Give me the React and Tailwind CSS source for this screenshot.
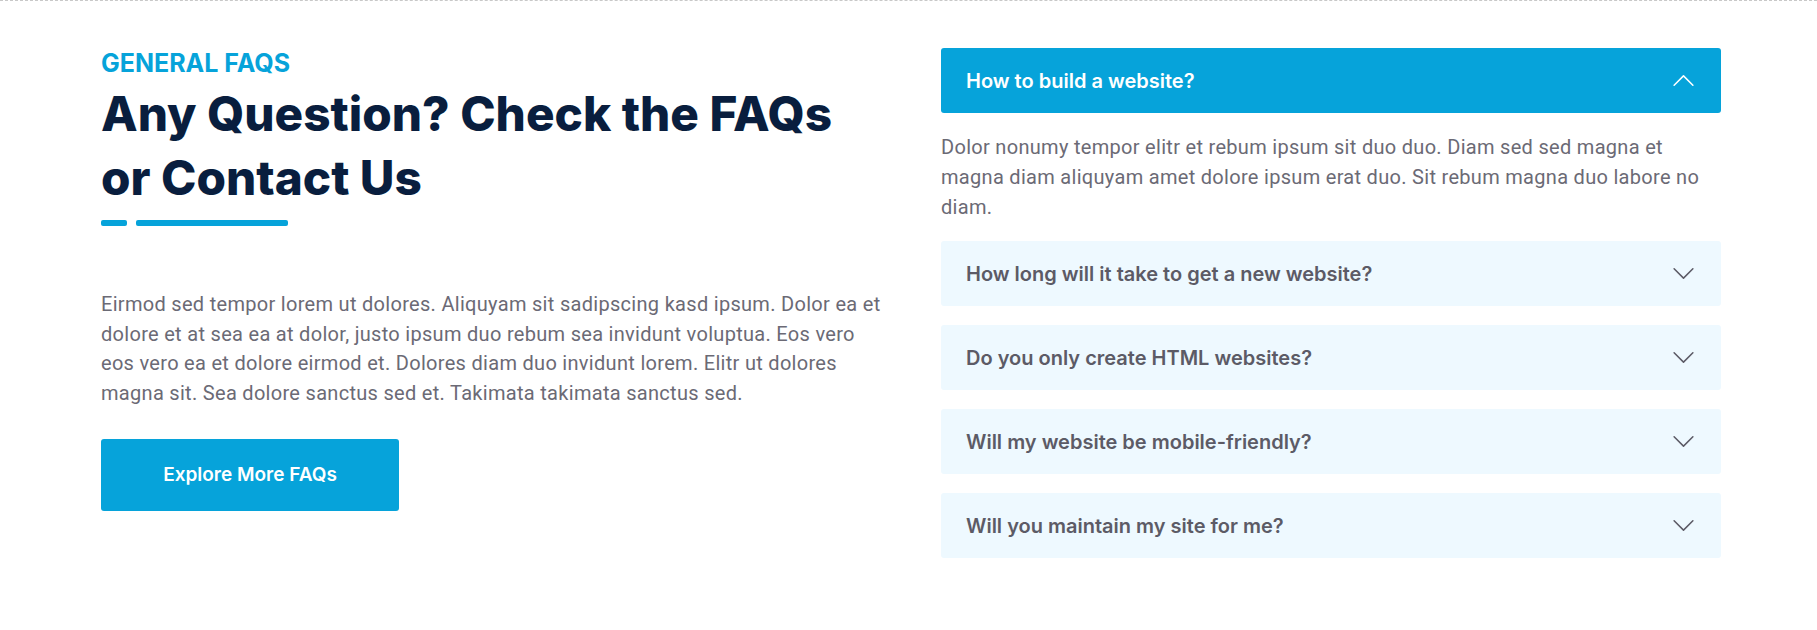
import React from 'react'

const faqs = [
  'How long will it take to get a new website?',
  'Do you only create HTML websites?',
  'Will my website be mobile-friendly?',
  'Will you maintain my site for me?',
]

function Chevron({ open }) {
  return (
    <svg viewBox="0 0 16 16" className={`w-[25px] h-[25px] shrink-0 ${open ? 'rotate-180' : ''}`} fill={open ? '#ffffff' : '#5c5b66'}>
      <path fillRule="evenodd" d="M1.646 4.646a.5.5 0 0 1 .708 0L8 10.293l5.646-5.647a.5.5 0 0 1 .708.708l-6 6a.5.5 0 0 1-.708 0l-6-6a.5.5 0 0 1 0-.708z" />
    </svg>
  )
}

export default function App() {
  return (
    <div className="min-h-[630px] bg-white border-t border-dashed border-[#c8c8c8]">
      <div className="ml-[101px] w-[1620px] grid grid-cols-2 gap-[60px] pt-[47px]">
        {/* left column */}
        <div>
          <h5 className="font-['Inter',sans-serif] font-bold text-[25px] leading-[30px] text-[#06A3DA] uppercase">General FAQs</h5>
          <h1 className="mt-[4px] font-['Inter',sans-serif] font-extrabold text-[47.7px] leading-[64px] text-[#091E3E]">
            Any Question? Check the FAQs<br />or Contact Us
          </h1>
          <div className="mt-[10px] flex gap-[9px]">
            <div className="w-[26px] h-[6px] rounded-[2px] bg-[#06A3DA]" />
            <div className="w-[152px] h-[6px] rounded-[2px] bg-[#06A3DA]" />
          </div>
          <p className="mt-[64px] font-['Roboto',sans-serif] text-[20px] leading-[29.5px] tracking-[0.3px] text-[#6B6A75]">
            Eirmod sed tempor lorem ut dolores. Aliquyam sit sadipscing kasd ipsum. Dolor ea et<br />
            dolore et at sea ea at dolor, justo ipsum duo rebum sea invidunt voluptua. Eos vero<br />
            eos vero ea et dolore eirmod et. Dolores diam duo invidunt lorem. Elitr ut dolores<br />
            magna sit. Sea dolore sanctus sed et. Takimata takimata sanctus sed.
          </p>
          <button
            type="button"
            className="mt-[31px] w-[298px] h-[72px] rounded-[3px] bg-[#06A3DA] text-white font-['Inter',sans-serif] font-semibold text-[19px]"
          >
            Explore More FAQs
          </button>
        </div>

        {/* right column */}
        <div className="flex flex-col">
          <div className="h-[65px] rounded-[3px] bg-[#06A3DA] flex items-center justify-between px-[25px]">
            <span className="font-['Inter',sans-serif] font-semibold text-[20px] text-white">How to build a website?</span>
            <Chevron open />
          </div>
          <p className="mt-[19px] font-['Roboto',sans-serif] text-[20px] leading-[30px] tracking-[0.3px] text-[#6B6A75]">
            Dolor nonumy tempor elitr et rebum ipsum sit duo duo. Diam sed sed magna et<br />
            magna diam aliquyam amet dolore ipsum erat duo. Sit rebum magna duo labore no<br />
            diam.
          </p>
          <div className="mt-[19px] flex flex-col gap-[19px]">
            {faqs.map((q) => (
              <div key={q} className="h-[65px] rounded-[3px] bg-[#EEF9FF] flex items-center justify-between px-[25px]">
                <span className="font-['Inter',sans-serif] font-semibold text-[20px] text-[#5c5b66]">{q}</span>
                <Chevron />
              </div>
            ))}
          </div>
        </div>
      </div>
    </div>
  )
}
